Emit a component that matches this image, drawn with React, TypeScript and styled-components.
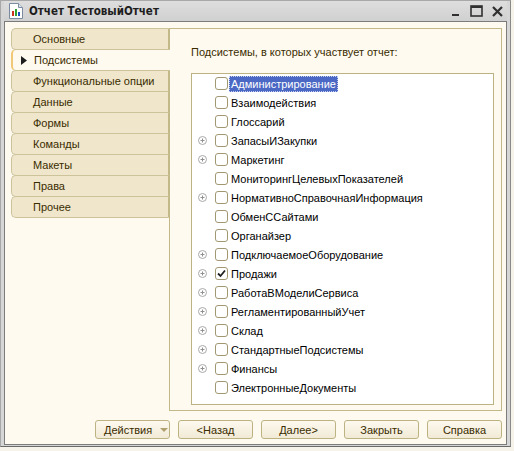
import React from "react";
import styled, { createGlobalStyle } from "styled-components";

const GlobalStyle = createGlobalStyle`
  html, body {
    margin: 0;
    padding: 0;
    background: #f6f3ea;
  }
  body {
    font-family: "Liberation Sans", Arial, sans-serif;
    font-size: 11px;
  }
`;

const tabs = [
  "Основные",
  "Подсистемы",
  "Функциональные опции",
  "Данные",
  "Формы",
  "Команды",
  "Макеты",
  "Права",
  "Прочее",
];

interface Subsystem {
  name: string;
  expandable?: boolean;
  checked?: boolean;
  selected?: boolean;
}

const subsystems: Subsystem[] = [
  { name: "Администрирование", selected: true },
  { name: "Взаимодействия" },
  { name: "Глоссарий" },
  { name: "ЗапасыИЗакупки", expandable: true },
  { name: "Маркетинг", expandable: true },
  { name: "МониторингЦелевыхПоказателей" },
  { name: "НормативноСправочнаяИнформация", expandable: true },
  { name: "ОбменССайтами" },
  { name: "Органайзер" },
  { name: "ПодключаемоеОборудование", expandable: true },
  { name: "Продажи", expandable: true, checked: true },
  { name: "РаботаВМоделиСервиса", expandable: true },
  { name: "РегламентированныйУчет", expandable: true },
  { name: "Склад", expandable: true },
  { name: "СтандартныеПодсистемы", expandable: true },
  { name: "Финансы", expandable: true },
  { name: "ЭлектронныеДокументы" },
];

const buttons = ["<Назад", "Далее>", "Закрыть", "Справка"];

const DocIcon = () => (
  <svg width="14" height="16" viewBox="0 0 14 16">
    <path d="M0.5 0.5 H9.5 L13.5 4.5 V15.5 H0.5 Z" fill="#fff" stroke="#7a8aa0" />
    <path d="M9.5 0.5 V4.5 H13.5" fill="#dde4ee" stroke="#7a8aa0" />
    <rect x="3" y="8" width="2" height="5" fill="#d03020" />
    <rect x="6" y="6" width="2" height="7" fill="#30a030" />
    <rect x="9" y="9" width="2" height="4" fill="#2050c0" />
  </svg>
);

const ExpandIcon = () => (
  <svg width="9" height="9" viewBox="0 0 9 9">
    <circle cx="4.5" cy="4.5" r="4" fill="#fff" stroke="#a8a8a8" />
    <path d="M2.5 4.5 H6.5 M4.5 2.5 V6.5" stroke="#909090" />
  </svg>
);

const App: React.FC = () => {
  return (
    <>
      <GlobalStyle />
      <Window>
        <TitleBar>
          <DocIcon />
          <Title>Отчет ТестовыйОтчет</Title>
          <WinButtons>
            <svg width="10" height="10" viewBox="0 0 10 10">
              <rect x="1" y="8" width="7" height="2" fill="#303030" />
            </svg>
            <svg width="13" height="12" viewBox="0 0 13 12">
              <rect x="1" y="1" width="11" height="10" fill="none" stroke="#303030" strokeWidth="1.6" />
              <rect x="1" y="1" width="11" height="2" fill="#303030" />
            </svg>
            <svg width="11" height="11" viewBox="0 0 11 11">
              <path d="M1 1 L10 10 M10 1 L1 10" stroke="#303030" strokeWidth="2.2" />
            </svg>
          </WinButtons>
        </TitleBar>
        <Client>
          <Main>
            <TabList>
              {tabs.map((t, i) => (
                <Tab key={t} active={i === 1}>
                  {i === 1 && (
                    <TabMarker>
                      <svg width="6" height="9" viewBox="0 0 6 9">
                        <path d="M0 0 L6 4.5 L0 9 Z" fill="#1e1e1e" />
                      </svg>
                    </TabMarker>
                  )}
                  {t}
                </Tab>
              ))}
            </TabList>
            <Panel>
              <Caption>Подсистемы, в которых участвует отчет:</Caption>
              <ListBox>
                {subsystems.map((s) => (
                  <Row key={s.name}>
                    <ExpandSlot>{s.expandable && <ExpandIcon />}</ExpandSlot>
                    <CheckBox>
                      {s.checked && (
                        <svg width="9" height="9" viewBox="0 0 9 9">
                          <path d="M1 4.5 L3.5 7 L8 1.5" fill="none" stroke="#202020" strokeWidth="1.8" />
                        </svg>
                      )}
                    </CheckBox>
                    <ItemText selected={s.selected}>{s.name}</ItemText>
                  </Row>
                ))}
              </ListBox>
            </Panel>
          </Main>
          <Footer>
            <Button>
              Действия <DropArrow />
            </Button>
            {buttons.map((b) => (
              <Button key={b} centered>
                {b}
              </Button>
            ))}
          </Footer>
        </Client>
      </Window>
    </>
  );
};

const Window = styled.div`
  width: 511px;
  height: 447px;
  box-sizing: border-box;
  background: #d6d6d6;
  border: 1px solid #a8a8a8;
  border-right-color: #8a8a8a;
  border-bottom-color: #6a6a6a;
  padding: 0 3px 1px 3px;
  display: flex;
  flex-direction: column;
`;

const TitleBar = styled.div`
  height: 21px;
  display: flex;
  align-items: center;
  padding: 0 0 0 5px;
  gap: 6px;
  background: linear-gradient(#dedede, #d0d0d0);
`;

const Title = styled.span`
  flex: 1;
  font-family: "DejaVu Sans Condensed", "DejaVu Sans", sans-serif;
  font-weight: bold;
  font-size: 11.5px;
  color: #1e1e1e;
`;

const WinButtons = styled.div`
  display: flex;
  align-items: center;
  gap: 9px;
  padding-right: 4px;
`;

const Client = styled.div`
  flex: 1;
  background: #fefaef;
  border: 1px solid #7c7c7c;
  padding: 6px 4px 5px 6px;
  display: flex;
  flex-direction: column;
`;

const Main = styled.div`
  display: flex;
  height: 383px;
`;

const TabList = styled.div`
  width: 158px;
  display: flex;
  flex-direction: column;
`;

const Tab = styled.div<{ active?: boolean }>`
  position: relative;
  height: 22px;
  box-sizing: border-box;
  display: flex;
  align-items: center;
  padding-left: 21px;
  color: #3a2c00;
  background: ${(p) => (p.active ? "#fefaef" : "#efe6cc")};
  border: 1px solid #cdc39a;
  border-right: ${(p) => (p.active ? "none" : "1px solid #c3b888")};
  margin-right: ${(p) => (p.active ? "-1px" : "0")};
  border-left: ${(p) => (p.active ? "2px solid #f0c878" : "1px solid #cdc39a")};
  border-radius: 5px 0 0 5px;
  margin-top: -1px;
  &:first-child {
    margin-top: 0;
  }
  z-index: ${(p) => (p.active ? 2 : 1)};
`;

const TabMarker = styled.span`
  position: absolute;
  left: 8px;
  top: 6px;
  display: flex;
`;

const Panel = styled.div`
  flex: 1;
  box-sizing: border-box;
  border: 1px solid #c3b888;
  background: #fefaef;
  padding: 0 7px 5px 21px;
  display: flex;
  flex-direction: column;
`;

const Caption = styled.div`
  height: 44px;
  display: flex;
  align-items: center;
  padding-top: 1px;
  box-sizing: border-box;
  color: #3a2c00;
`;

const ListBox = styled.div`
  flex: 1;
  background: #ffffff;
  border: 1px solid #bdb382;
  display: flex;
  flex-direction: column;
`;

const Row = styled.div`
  height: 19px;
  display: flex;
  align-items: center;
  color: #000;
`;

const ExpandSlot = styled.div`
  width: 9px;
  height: 9px;
  margin-left: 6px;
  margin-right: 8px;
  display: flex;
`;

const CheckBox = styled.div`
  width: 13px;
  height: 13px;
  box-sizing: border-box;
  border: 1px solid #a19872;
  border-radius: 3px;
  background: #fff;
  display: flex;
  align-items: center;
  justify-content: center;
  margin-right: 1px;
`;

const ItemText = styled.span<{ selected?: boolean }>`
  padding: 1px 2px;
  line-height: 14px;
  background: ${(p) => (p.selected ? "#4a68c4" : "transparent")};
  color: ${(p) => (p.selected ? "#fff" : "#000")};
  outline: ${(p) => (p.selected ? "1px dotted #c8d0f0" : "none")};
  outline-offset: -1px;
`;

const Footer = styled.div`
  display: flex;
  justify-content: flex-end;
  gap: 8px;
  padding-top: 9px;
`;

const Button = styled.div<{ centered?: boolean }>`
  width: 75px;
  height: 19px;
  box-sizing: border-box;
  border: 1px solid #bdb382;
  border-radius: 3px;
  background: linear-gradient(#fdf9ee, #f1ead6);
  display: flex;
  align-items: center;
  justify-content: ${(p) => (p.centered ? "center" : "flex-start")};
  padding-left: ${(p) => (p.centered ? "0" : "8px")};
  gap: 8px;
  color: #3a2c00;
`;

const DropArrow = styled.span`
  width: 0;
  height: 0;
  border-left: 4px solid transparent;
  border-right: 4px solid transparent;
  border-top: 4px solid #b0a070;
`;

export default App;
